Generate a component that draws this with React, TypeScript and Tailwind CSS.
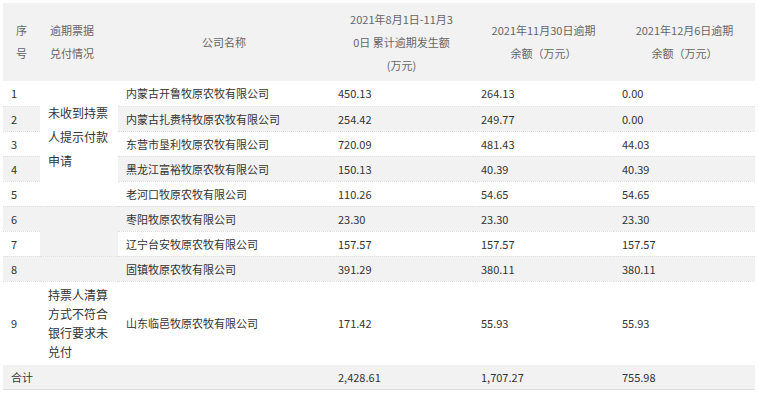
import React from "react";

const G = "bg-[#f2f2f2]";
const rows = [
  ["1","内蒙古开鲁牧原农牧有限公司","450.13","264.13","0.00"],
  ["2","内蒙古扎赉特牧原农牧有限公司","254.42","249.77","0.00"],
  ["3","东营市垦利牧原农牧有限公司","720.09","481.43","44.03"],
  ["4","黑龙江富裕牧原农牧有限公司","150.13","40.39","40.39"],
  ["5","老河口牧原农牧有限公司","110.26","54.65","54.65"],
  ["6","枣阳牧原农牧有限公司","23.30","23.30","23.30"],
  ["7","辽宁台安牧原农牧有限公司","157.57","157.57","157.57"],
  ["8","固镇牧原农牧有限公司","391.29","380.11","380.11"],
];

export default function App() {
  const td = "px-[8px] h-[25px] leading-[16px] whitespace-nowrap border-b border-dotted border-[#e0e0e0]";
  return (
    <div className="w-[758px] h-[400px] bg-white pt-[3px] px-[3px] text-[11px] text-[#333]" style={{ fontFamily: '"Noto Sans CJK SC", "Noto Sans", sans-serif' }}>
      <table className="w-[752px] border-collapse table-fixed">
        <colgroup>
          <col className="w-[37px]" /><col className="w-[78px]" /><col className="w-[212px]" />
          <col className="w-[143px]" /><col className="w-[141px]" /><col className="w-[141px]" />
        </colgroup>
        <thead>
          <tr className={`${G} text-[#666] leading-[23px] h-[78px]`}>
            <th className="font-normal text-center">序<br />号</th>
            <th className="font-normal text-left px-[10px] whitespace-nowrap">逾期票据<br />兑付情况</th>
            <th className="font-normal text-center">公司名称</th>
            <th className="font-normal text-center whitespace-nowrap">2021年8月1日-11月3<br />0日 累计逾期发生额<br />(万元)</th>
            <th className="font-normal text-center whitespace-nowrap">2021年11月30日逾期<br />余额（万元）</th>
            <th className="font-normal text-center whitespace-nowrap">2021年12月6日逾期<br />余额（万元）</th>
          </tr>
        </thead>
        <tbody>
          {rows.map((r, i) => {
            const gray = i % 2 === 1;
            const bg = gray ? G : "bg-white";
            return (
              <tr key={i}>
                <td className={`${td} ${bg}`}>{r[0]}</td>
                {i === 0 && (
                  <td rowSpan={4} className="px-[8px] bg-white align-middle leading-[24px] text-[12px] whitespace-nowrap pt-[12px]">未收到持票<br />人提示付款<br />申请</td>
                )}
                {i === 4 && <td className={`${td} bg-white`}></td>}
                {i === 5 && <td rowSpan={2} className={`${td} ${G}`}></td>}
                {i === 7 && <td className={`${td} ${G}`}></td>}
                <td className={`${td} ${bg}`}>{r[1]}</td>
                <td className={`${td} ${bg}`}>{r[2]}</td>
                <td className={`${td} ${bg}`}>{r[3]}</td>
                <td className={`${td} ${bg}`}>{r[4]}</td>
              </tr>
            );
          })}
          <tr className="h-[84px] bg-white">
            <td className="px-[8px]">9</td>
            <td className="px-[8px] leading-[19px] text-[12px] whitespace-nowrap">持票人清算<br />方式不符合<br />银行要求未<br />兑付</td>
            <td className="px-[8px]">山东临邑牧原农牧有限公司</td>
            <td className="px-[8px]">171.42</td>
            <td className="px-[8px]">55.93</td>
            <td className="px-[8px]">55.93</td>
          </tr>
          <tr className={`${G} h-[24px] border-b border-[#ddd]`}>
            <td colSpan={3} className="px-[8px]">合计</td>
            <td className="px-[8px]">2,428.61</td>
            <td className="px-[8px]">1,707.27</td>
            <td className="px-[8px]">755.98</td>
          </tr>
        </tbody>
      </table>
    </div>
  );
}
